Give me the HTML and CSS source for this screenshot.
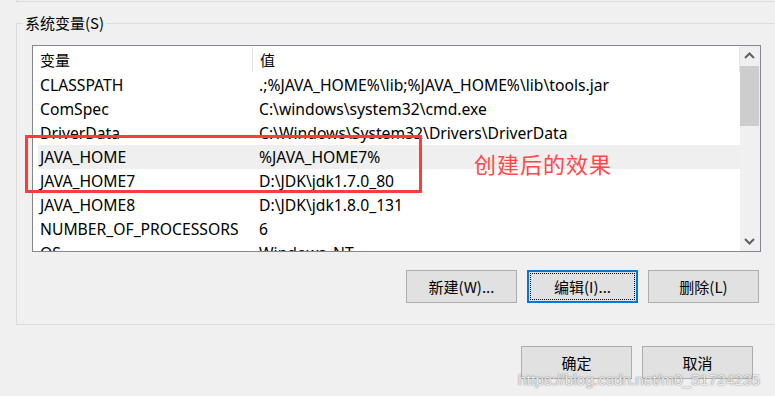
FILE: index.html
```html
<!DOCTYPE html>
<html lang="zh">
<head>
<meta charset="utf-8">
<link rel="stylesheet" href="styles.css">
</head>
<body>
<div class="prev-group"></div>
<div class="group">
  <div class="group-label">系统变量(S)</div>
  <div class="listbox">
    <div class="list-main">
      <div class="row header">
        <div class="c1">变量</div>
        <div class="c2">值</div>
        <div class="c3"></div>
      </div>
      <div class="row"><div class="c1">CLASSPATH</div><div class="c2">.;%JAVA_HOME%\lib;%JAVA_HOME%\lib\tools.jar</div></div>
      <div class="row"><div class="c1">ComSpec</div><div class="c2">C:\windows\system32\cmd.exe</div></div>
      <div class="row"><div class="c1">DriverData</div><div class="c2">C:\Windows\System32\Drivers\DriverData</div></div>
      <div class="row hl"><div class="c1">JAVA_HOME</div><div class="c2">%JAVA_HOME7%</div></div>
      <div class="row"><div class="c1">JAVA_HOME7</div><div class="c2">D:\JDK\jdk1.7.0_80</div></div>
      <div class="row"><div class="c1">JAVA_HOME8</div><div class="c2">D:\JDK\jdk1.8.0_131</div></div>
      <div class="row"><div class="c1">NUMBER_OF_PROCESSORS</div><div class="c2">6</div></div>
      <div class="row"><div class="c1">OS</div><div class="c2">Windows_NT</div></div>
    </div>
    <div class="scrollbar">
      <svg class="arrow" width="19" height="20" viewBox="0 0 19 20"><path d="M5 12 L9.5 7.5 L14 12" fill="none" stroke="#606060" stroke-width="2"/></svg>
      <div class="thumb"></div>
      <div class="track"></div>
      <svg class="arrow" width="19" height="20" viewBox="0 0 19 20"><path d="M5 8 L9.5 12.5 L14 8" fill="none" stroke="#606060" stroke-width="2"/></svg>
    </div>
  </div>
  <div class="btn-row">
    <div class="btn">新建(W)...</div>
    <div class="btn focus"><span class="focus-ring">编辑(I)...</span></div>
    <div class="btn">删除(L)</div>
  </div>
  <div class="annot-box"></div>
  <div class="annot-text">创建后的效果</div>
</div>
<div class="dialog-row">
  <div class="btn">确定</div>
  <div class="btn">取消</div>
</div>
<div class="watermark">https://blog.csdn.net/m0_51724235</div>
</body>
</html>
```
FILE: styles.css
```css
html, body {
  margin: 0;
  padding: 0;
  background: #f0f0f0;
  width: 775px;
  height: 396px;
  overflow: hidden;
  position: relative;
  font-family: "Noto Sans", "Noto Sans CJK SC", sans-serif;
  font-size: 15px;
  color: #000;
}
.prev-group {
  margin-left: 16px;
  height: 1px;
  width: 757px;
  border-left: 1px solid #dcdcdc;
  border-bottom: 1px solid #dcdcdc;
}
.group {
  position: relative;
  margin-top: 21px;
  margin-left: 16px;
  width: 757px;
  height: 300px;
  border: 1px solid #dcdcdc;
  border-right: none;
}
.group-label {
  display: inline-block;
  margin-top: -11px;
  margin-left: 6px;
  padding: 0 2px 0 2px;
  height: 20px;
  line-height: 20px;
  background: #f0f0f0;
  font-family: "Noto Sans CJK SC", sans-serif;
  font-size: 15px;
  vertical-align: top;
}
.listbox {
  margin-top: 1px;
  margin-left: 15px;
  width: 727px;
  height: 205px;
  border: 1px solid #828790;
  background: #fff;
  display: flex;
  overflow: hidden;
}
.list-main {
  flex: 1;
  overflow: hidden;
  font-size: 15.7px;
}
.row {
  display: flex;
  height: 24px;
  line-height: 24px;
  margin-left: 5px;
  white-space: nowrap;
}
.row.header {
  height: 27px;
  line-height: 27px;
  font-family: "Noto Sans CJK SC", sans-serif;
  font-size: 15px;
}
.row.hl { background: #efefef; }
.c1 {
  width: 212px;
  padding-left: 2px;
  flex: none;
}
.c2 {
  padding-left: 7px;
  flex: 1;
}
.header .c2 {
  border-left: 1px solid #e5e5e5;
  height: 25px;
  margin-top: 1px;
  line-height: 25px;
}
.header .c3 {
  width: 0;
  border-left: 1px solid #e5e5e5;
  height: 25px;
  margin-top: 1px;
}
.scrollbar {
  width: 20px;
  background: #f0f0f0;
  display: flex;
  flex-direction: column;
  flex: none;
}
.arrow { display: block; flex: none; }
.thumb {
  height: 60px;
  width: 19px;
  background: #cdcdcd;
  flex: none;
}
.track { flex: 1; }
.btn-row {
  display: flex;
  gap: 10px;
  margin-top: 18px;
  margin-left: 389px;
}
.btn {
  box-sizing: border-box;
  width: 111px;
  height: 33px;
  border: 1px solid #adadad;
  background: #e1e1e1;
  display: flex;
  align-items: center;
  justify-content: center;
  font-family: "Noto Sans CJK SC", sans-serif;
  font-size: 15px;
}
.btn.focus {
  border: 2px solid #0078d7;
  padding: 1px;
}
.focus-ring {
  box-sizing: border-box;
  width: 100%;
  height: 100%;
  border: 1px dotted #000;
  display: flex;
  align-items: center;
  justify-content: center;
}
.annot-box {
  position: absolute;
  left: 8px;
  top: 111px;
  width: 391px;
  height: 52px;
  border: 3px solid #fd3c3c;
}
.annot-text {
  position: absolute;
  left: 457px;
  top: 124px;
  font-family: "Noto Sans CJK SC", sans-serif;
  font-size: 22px;
  line-height: 30px;
  letter-spacing: 1px;
  color: #ff4848;
}
.dialog-row {
  display: flex;
  gap: 10px;
  margin-top: 21px;
  margin-left: 521px;
}
.watermark {
  position: absolute;
  left: 518px;
  top: 370px;
  font-family: "Liberation Sans", sans-serif;
  font-size: 15.5px;
  line-height: 20px;
  color: rgba(255,255,255,0.85);
  text-shadow: 0 0 1px rgba(90,90,90,0.8), 0 0 2px rgba(120,120,120,0.5);
  white-space: nowrap;
}
```
